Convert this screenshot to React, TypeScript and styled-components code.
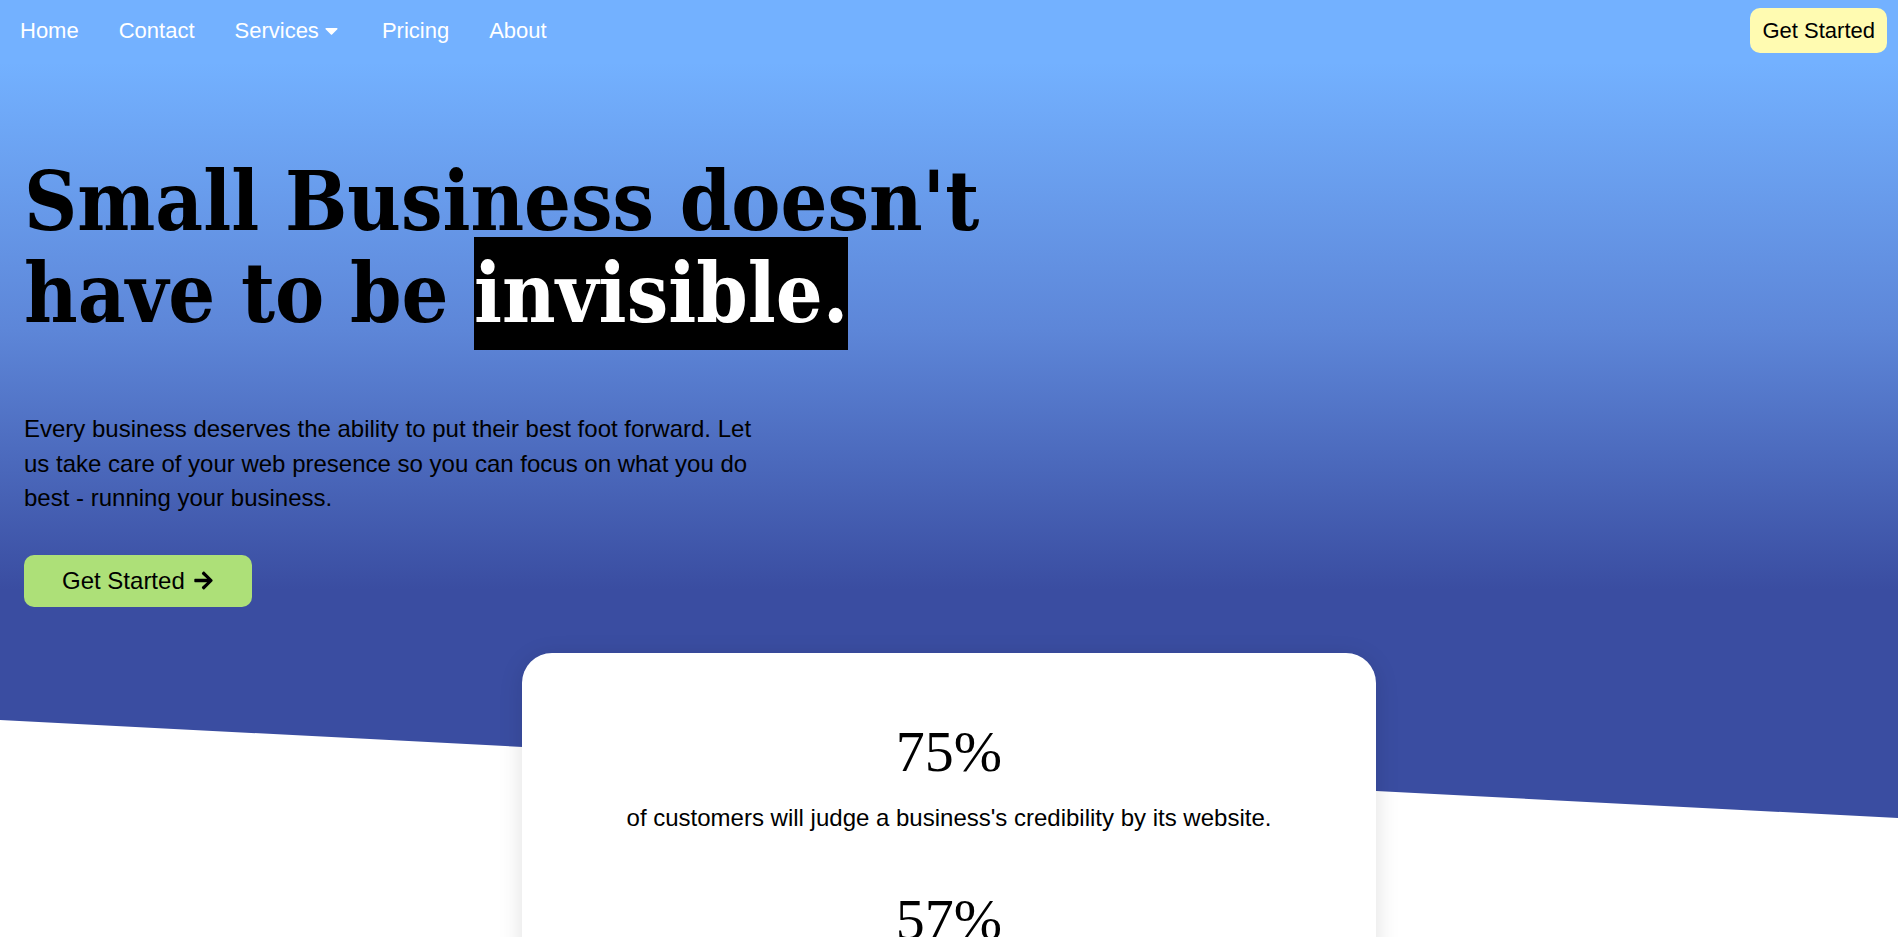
import styled, { createGlobalStyle } from "styled-components";
import { FaArrowRight, FaCaretDown } from "react-icons/fa";

const GlobalStyle = createGlobalStyle`
  body {
    margin: 0;
    font-family: "Liberation Sans", Arial, sans-serif;
    background: #ffffff;
    color: #000000;
  }
`;

const navLinks = ["Home", "Contact", "Services", "Pricing", "About"];

const stats = [
  {
    amount: "75%",
    text: "of customers will judge a business's credibility by its website.",
  },
  {
    amount: "57%",
    text: "of internet users won't recommend a business with a poorly designed website.",
  },
];

const App = () => {
  return (
    <>
      <GlobalStyle />
      <Hero>
        <NavBar>
          <NavLinks>
            {navLinks.map((link) => (
              <NavLink key={link}>
                {link}
                {link === "Services" && <FaCaretDown size={21} />}
              </NavLink>
            ))}
          </NavLinks>
          <NavButton>Get Started</NavButton>
        </NavBar>

        <HeroContent>
          <Headline>
            Small Business doesn't
            <br />
            have to be <Highlight>invisible.</Highlight>
          </Headline>
          <Lead>
            Every business deserves the ability to put their best foot forward.
            Let us take care of your web presence so you can focus on what you
            do best - running your business.
          </Lead>
          <CtaButton>
            Get Started <FaArrowRight size={21} />
          </CtaButton>
        </HeroContent>
      </Hero>

      <CardSection>
        <StatsCard>
          {stats.map((stat) => (
            <Stat key={stat.amount}>
              <StatAmount>{stat.amount}</StatAmount>
              <StatText>{stat.text}</StatText>
            </Stat>
          ))}
        </StatsCard>
      </CardSection>
    </>
  );
};

const Hero = styled.section`
  height: 818px;
  background: linear-gradient(
    to bottom,
    #73b1ff 0px,
    #73b1ff 62px,
    #5d86d8 330px,
    #3a4da1 590px,
    #3a4da1 100%
  );
  clip-path: polygon(0 0, 100% 0, 100% 100%, 0 720px);
`;

const NavBar = styled.nav`
  display: flex;
  align-items: center;
  justify-content: space-between;
  height: 61px;
  padding: 0 11px 0 20px;
`;

const NavLinks = styled.ul`
  display: flex;
  gap: 40px;
  margin: 0;
  padding: 0;
  list-style: none;
`;

const NavLink = styled.li`
  display: flex;
  align-items: center;
  gap: 2px;
  color: #ffffff;
  font-size: 22px;
  cursor: pointer;
`;

const NavButton = styled.button`
  height: 45px;
  padding: 0 12px;
  border: none;
  border-radius: 10px;
  background: #fffbb1;
  color: #000000;
  font-family: "Liberation Sans", Arial, sans-serif;
  font-size: 22px;
  cursor: pointer;
`;

const HeroContent = styled.div`
  padding: 94px 24px 0;
`;

const Headline = styled.h1`
  margin: 0;
  font-family: "DejaVu Serif Condensed", "DejaVu Serif", serif;
  font-stretch: semi-condensed;
  font-weight: 700;
  font-size: 82px;
  line-height: 92px;
  color: #000000;
`;

const Highlight = styled.span`
  padding: 8px 0 9px;
  background: #000000;
  color: #ffffff;
`;

const Lead = styled.p`
  max-width: 735px;
  margin: 73px 0 0;
  font-size: 24px;
  line-height: 34.5px;
`;

const CtaButton = styled.button`
  display: flex;
  align-items: center;
  gap: 8px;
  height: 52px;
  margin-top: 39px;
  padding: 0 38px;
  border: none;
  border-radius: 10px;
  background: #ade078;
  color: #000000;
  font-family: "Liberation Sans", Arial, sans-serif;
  font-size: 24px;
  cursor: pointer;
`;

const CardSection = styled.section`
  display: flex;
  justify-content: center;
  margin-top: -165px;
  padding-bottom: 80px;
`;

const StatsCard = styled.div`
  position: relative;
  width: 45%;
  box-sizing: border-box;
  padding: 64px 40px 40px;
  background: #ffffff;
  border-radius: 30px;
  box-shadow: 0 4px 24px rgba(0, 0, 0, 0.12);
  display: flex;
  flex-direction: column;
  gap: 54px;
`;

const Stat = styled.div`
  display: flex;
  flex-direction: column;
  align-items: center;
  gap: 17px;
  text-align: center;
`;

const StatAmount = styled.div`
  font-family: "Liberation Serif", "Times New Roman", serif;
  font-size: 58px;
  line-height: 1.2;
`;

const StatText = styled.div`
  font-size: 24px;
  line-height: 1.15;
`;

export default App;
